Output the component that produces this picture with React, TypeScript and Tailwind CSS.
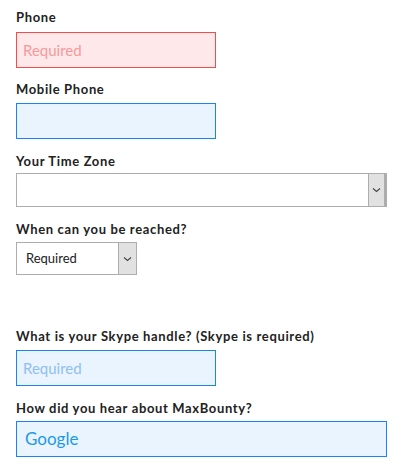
import React from 'react';

const Chevron: React.FC = () => (
  <svg width="9" height="6" viewBox="0 0 9 6" fill="none">
    <path d="M1 1.5 L4.5 4.5 L8 1.5" stroke="#444" strokeWidth="1.1" />
  </svg>
);

const Label: React.FC<{ children: React.ReactNode }> = ({ children }) => (
  <label className="block text-[13px] leading-[20px] font-bold tracking-[0.65px] text-[#222]">{children}</label>
);

const App: React.FC = () => {
  return (
    <div className="min-h-screen bg-white pl-4 pt-[7px] font-['Lato',sans-serif]">
      <Label>Phone</Label>
      <div className="mt-[5px] w-[200px] h-[36px] border border-[#f44b4b] bg-[#ffe8e9] flex items-center px-[6px] text-[15px] text-[#f7999b]">
        Required
      </div>

      <div className="mt-[11px]">
        <Label>Mobile Phone</Label>
        <div className="mt-[4px] w-[200px] h-[36px] border border-[#1a84f5] bg-[#eaf4fe]"></div>
      </div>

      <div className="mt-3">
        <Label>Your Time Zone</Label>
        <div className="mt-[2px] w-[371px] h-[34px] border border-[#adadad] bg-white flex">
          <div className="flex-1"></div>
          <div className="w-[18px] h-full bg-[#e1e1e1] border-l border-[#adadad] border-r-2 flex items-center justify-center">
            <Chevron />
          </div>
        </div>
      </div>

      <div className="mt-3">
        <Label>When can you be reached?</Label>
        <div className="mt-[3px] w-[121px] h-[33px] border border-[#adadad] bg-white flex">
          <div className="flex-1 flex items-center pl-[9px] text-[13px] text-[#222]">Required</div>
          <div className="w-[18px] h-full bg-[#e1e1e1] border-l border-[#adadad] flex items-center justify-center">
            <Chevron />
          </div>
        </div>
      </div>

      <div className="mt-[51px]">
        <Label>What is your Skype handle? (Skype is required)</Label>
        <div className="mt-1 w-[200px] h-[36px] border border-[#1a84f5] bg-[#eaf4fe] flex items-center px-[6px] text-[15px] text-[#8fbff2]">
          Required
        </div>
      </div>

      <div className="mt-3">
        <Label>How did you hear about MaxBounty?</Label>
        <div className="mt-[3px] w-[371px] h-[36px] border border-[#1a84f5] bg-[#eaf4fe] flex items-center px-2 text-[17px] text-[#1b9ae6]">
          Google
        </div>
      </div>
    </div>
  );
};

export default App;
